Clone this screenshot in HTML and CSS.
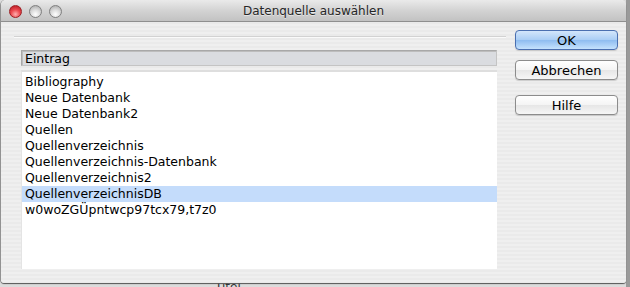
FILE: index.html
```html
<!DOCTYPE html>
<html>

<head>
    <meta charset="utf-8">
    <title>Datenquelle auswählen</title>
    <link rel="stylesheet" href="styles.css">
</head>

<body>
    <div class="desk">
        <div class="window">
            <div class="titlebar">
                <div class="lights">
                    <span class="light red"></span>
                    <span class="light"></span>
                    <span class="light"></span>
                </div>
                <div class="title">Datenquelle auswählen</div>
            </div>
            <div class="content">
                <div class="main">
                    <div class="rule"></div>
                    <div class="table">
                        <div class="head">Eintrag</div>
                        <div class="list">
                            <div class="row">Bibliography</div>
                            <div class="row">Neue Datenbank</div>
                            <div class="row">Neue Datenbank2</div>
                            <div class="row">Quellen</div>
                            <div class="row">Quellenverzeichnis</div>
                            <div class="row">Quellenverzeichnis-Datenbank</div>
                            <div class="row">Quellenverzeichnis2</div>
                            <div class="row selected">QuellenverzeichnisDB</div>
                            <div class="row">w0woZGÜpntwcp97tcx79,t7z0</div>
                        </div>
                    </div>
                </div>
                <div class="buttons">
                    <button class="btn default">OK</button>
                    <button class="btn">Abbrechen</button>
                    <button class="btn help">Hilfe</button>
                </div>
            </div>
        </div>
        <div class="under">Titel</div>
    </div>
</body>

</html>
```

FILE: styles.css
```css
body {
    margin: 0;
    padding: 0;
    font-family: "Lucida Grande", "DejaVu Sans", sans-serif;
    font-size: 12.5px;
    color: #000000;
    background: #8c8c8c;
    overflow: hidden;
}

div.desk {
    width: 630px;
    height: 287px;
    background: linear-gradient(to right, #dcdcdc 0, #dcdcdc 626px, #9a9a9a 626px);
    position: relative;
}

div.window {
    margin-left: 1px;
    width: 625px;
    height: 283px;
    border-radius: 5px 5px 3px 3px;
    background: repeating-linear-gradient(#efefef 0, #efefef 2px, #eaeaea 2px, #eaeaea 4px);
    box-shadow: 0 1px 1px #555555, -1px 0 0 #9a9a9a;
    overflow: hidden;
    position: relative;
    z-index: 1;
}

div.titlebar {
    height: 22px;
    display: flex;
    align-items: center;
    position: relative;
    background: linear-gradient(#eaeaea, #d3d3d3 50%, #c2c2c2);
    border-bottom: 1px solid #8f8f8f;
    box-sizing: border-box;
}

div.lights {
    display: flex;
    gap: 7px;
    padding-left: 8px;
    padding-top: 1px;
}

span.light {
    width: 13px;
    height: 13px;
    border-radius: 50%;
    box-sizing: border-box;
    border: 1px solid #7f7f7f;
    background: radial-gradient(circle at 50% 75%, #ffffff 0, #dcdcdc 45%, #a4a4a4 100%);
}

span.light.red {
    border-color: #9c1f24;
    background: radial-gradient(circle at 50% 75%, #ffb0b0 0, #ec4a50 45%, #b0141b 100%);
}

div.title {
    position: absolute;
    left: 0;
    right: 0;
    top: 4px;
    text-align: center;
    font-size: 12px;
    color: #262626;
    text-shadow: 0 1px 0 rgba(255, 255, 255, 0.5);
}

div.content {
    display: flex;
    padding: 8px 0 0 13px;
}

div.main {
    width: 492px;
}

div.rule {
    margin-top: 6px;
    height: 1px;
    background: #d2d2d2;
    border-bottom: 1px solid #fafafa;
}

div.table {
    margin: 12px 0 0 7px;
    width: 476px;
}

div.head {
    height: 14px;
    line-height: 15px;
    padding-left: 3px;
    background: #dadce0;
    border: 1px solid #a8a8a8;
    border-right-color: #c4c4c4;
    border-bottom-color: #c4c4c4;
    box-shadow: inset 1px 1px 0 #bdbdbd;
}

div.list {
    margin-top: 4px;
    height: 195px;
    padding-top: 2px;
    background: #ffffff;
    border-top: 2px solid #dedede;
    border-left: 1px solid #e4e4e4;
}

div.row {
    height: 16px;
    line-height: 16px;
    padding-left: 3px;
}

div.row.selected {
    background: #c4dcfb;
}

div.buttons {
    display: flex;
    flex-direction: column;
    margin-left: 9px;
}

button.btn {
    width: 103px;
    height: 20px;
    margin: 0 0 10px 0;
    padding: 0;
    font-family: "Lucida Grande", "DejaVu Sans", sans-serif;
    font-size: 13px;
    color: #000000;
    border: 1px solid #8c8c8c;
    border-radius: 4px;
    background: linear-gradient(#ffffff, #f4f4f4 50%, #e6e6e6 51%, #f6f6f6);
    box-shadow: 0 1px 1px rgba(0, 0, 0, 0.15);
}

button.btn.default {
    border-color: #4a6fb0;
    background: linear-gradient(#d3e6fb, #a9cdf5 50%, #8ebcf0 51%, #c5e2fd);
}

button.btn.help {
    margin-top: 5px;
}

div.under {
    position: absolute;
    left: 215px;
    top: 280px;
    font-size: 12px;
    color: #333333;
}
```
